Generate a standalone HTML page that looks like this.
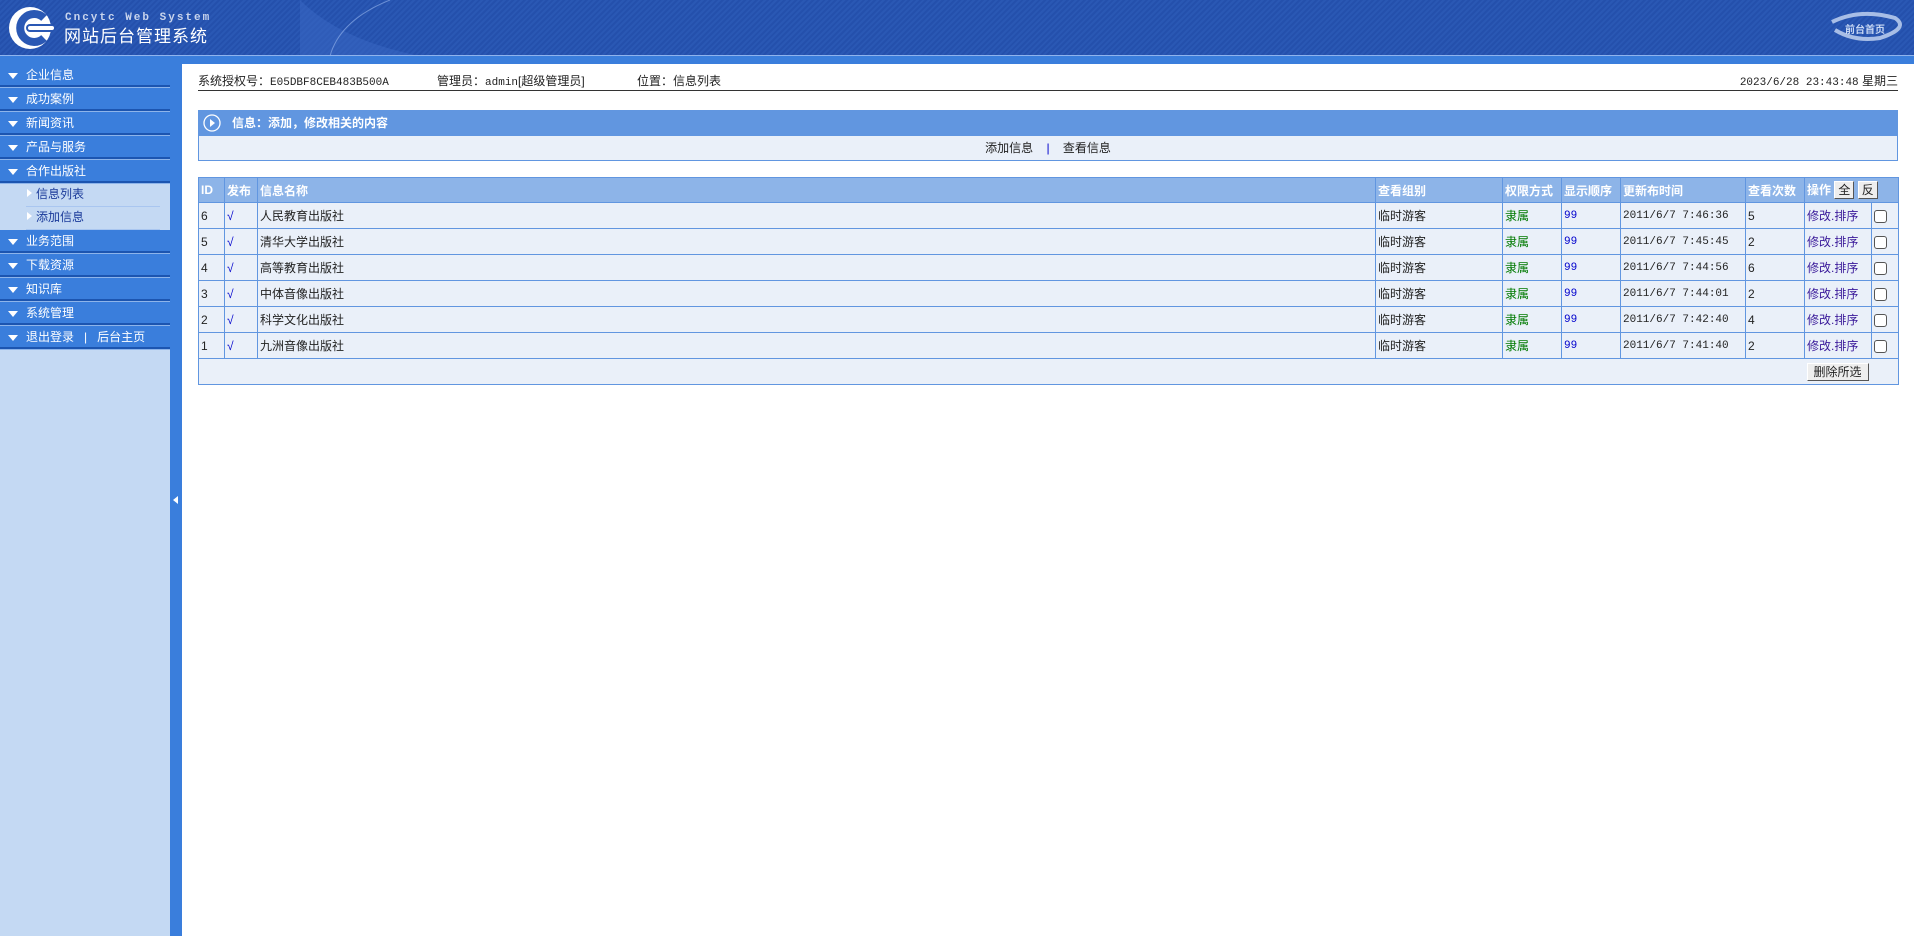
<!DOCTYPE html>
<html><head><meta charset="utf-8">
<style>
*{margin:0;padding:0;box-sizing:border-box}
body{width:1914px;height:936px;overflow:hidden;background:#fff;font-family:"Liberation Sans","Noto Sans CJK SC",sans-serif;font-size:12px;color:#222;position:relative}
#hd{position:absolute;left:0;top:0;width:1914px;height:56px;background:repeating-linear-gradient(135deg,#2a58b4 0 2px,#2450ac 2px 4px);}
#hd:after{content:"";position:absolute;left:0;right:0;bottom:0;height:1px;background:#8fb4ee}
#bar{position:absolute;left:0;top:56px;width:1914px;height:8px;background:#3a7edc}
#side{position:absolute;left:0;top:64px;width:170px;height:872px;background:#c4d9f3}
#split{position:absolute;left:170px;top:56px;width:12px;height:880px;background:#3a7edc}
.mi{height:24px;background:#3a7edc;color:#fff;line-height:22px;padding-left:26px;position:relative;border-bottom:2px solid #1c55b0;box-shadow:inset 0 -1px 0 #1c55b0}
.mi:after{content:"";position:absolute;left:0;right:0;bottom:-2px;height:1px;background:#8db4ea}
.mi:before{content:"";position:absolute;left:8px;top:9px;border-left:5px solid transparent;border-right:5px solid transparent;border-top:6px solid #fff}
.sub{background:#c4d9f3;padding:0 0 0 26px;height:46px}
.sub div{height:23px;line-height:21px;color:#1a3a9a;border-bottom:1px solid #a9c6f0;width:134px;padding-left:10px;position:relative}
.sub div:before{content:"";position:absolute;left:1px;top:5px;border-top:4px solid transparent;border-bottom:4px solid transparent;border-left:5px solid #fff}
#info{position:absolute;left:198px;top:70px;width:1700px;height:21px;border-bottom:1px solid #333;font-size:12px}
#info span{position:absolute;top:2px}
#panel{position:absolute;left:198px;top:110px;width:1700px;height:51px;border:1px solid #6196e0;background:#eaf0f9}
#panel .h{height:25px;background:#6196e0;color:#fff;font-weight:bold;line-height:25px;padding-left:33px;position:relative}
#panel .b{text-align:center;line-height:24px}
table{position:absolute;left:198px;top:177px;width:1700px;border-collapse:collapse;background:#eaf0f9;table-layout:fixed}
td{border:1px solid #6196e0;height:26px;padding:0 2px;white-space:nowrap;overflow:hidden;font-size:12px}
tr.th td{background:#8db4e8;color:#fff;font-weight:bold;height:25px}
.g{color:#007a00}.bl{color:#00c}.p{color:#3a1a9a}
.mono{font-family:"Liberation Mono","Noto Sans CJK SC",monospace;font-size:11px}
.cb{width:13px;height:13px;border:1px solid #555;border-radius:3px;background:#fff;display:inline-block;vertical-align:middle}
.btn{display:inline-block;border:1px solid #555;border-top-color:#fff;border-left-color:#fff;background:#eee;padding:0 6px;line-height:16px;font-weight:normal}
</style></head><body>
<div id="hd">
<svg width="1914" height="56" style="position:absolute;left:0;top:0">
<path d="M300 0 Q340 40 420 56 L300 56 Z" fill="#3a68c4" opacity=".5"/>
<path d="M330 56 Q340 20 390 0" stroke="#9ab8ee" stroke-width="1" fill="none" opacity=".6"/>
<circle cx="30" cy="28" r="21" fill="#fff"/>
<path d="M44 18 A14 14 0 1 0 44 38" stroke="#2a58b4" stroke-width="8" fill="none"/>
<rect x="26" y="24" width="28" height="8" rx="4" fill="#2a58b4"/>
<rect x="28" y="26" width="26" height="4" rx="2" fill="#fff"/>
<path d="M1832 22 Q1860 8 1895 18 Q1910 28 1880 38 Q1855 42 1835 30" fill="none" stroke="#c8d8f4" stroke-width="4" opacity=".8"/>
<text x="1845" y="33" fill="#c8d8f4" font-size="10" font-weight="bold" font-family="Noto Sans CJK SC,sans-serif">前台首页</text>
</svg>
<div style="position:absolute;left:65px;top:12px;color:#c8d4ec;font:bold 11px 'Liberation Mono',monospace;letter-spacing:2px">Cncytc Web System</div>
<div style="position:absolute;left:64px;top:22px;color:#fff;font-size:17px;letter-spacing:1px;font-family:'Noto Sans CJK SC',sans-serif">网站后台管理系统</div>
</div>
<div id="bar"></div>
<div id="side">
<div class="mi">企业信息</div><div class="mi">成功案例</div><div class="mi">新闻资讯</div><div class="mi">产品与服务</div><div class="mi">合作出版社</div>
<div class="sub"><div>信息列表</div><div>添加信息</div></div>
<div class="mi">业务范围</div><div class="mi">下载资源</div><div class="mi">知识库</div><div class="mi">系统管理</div><div class="mi">退出登录 &nbsp;&nbsp;| &nbsp;&nbsp;后台主页</div>
</div>
<div id="split"><div style="position:absolute;left:3px;top:440px;border-top:4px solid transparent;border-bottom:4px solid transparent;border-right:5px solid #fff"></div></div>
<div id="info"><span style="left:0">系统授权号：<span class="mono" style="position:static">E05DBF8CEB483B500A</span></span><span style="left:239px">管理员：<span class="mono" style="position:static">admin</span>[超级管理员]</span><span style="left:439px">位置：信息列表</span><span style="right:0"><span class="mono" style="position:static">2023/6/28 23:43:48</span> 星期三</span></div>
<div id="panel"><div class="h"><svg width="18" height="18" style="position:absolute;left:4px;top:3px"><circle cx="9" cy="9" r="8" fill="none" stroke="#fff" stroke-width="1.3"/><path d="M7 5 L12 9 L7 13Z" fill="#fff"/></svg>信息：添加，修改相关的内容</div>
<div class="b">添加信息 &nbsp;&nbsp;&nbsp;<span style="color:#00c">|</span>&nbsp;&nbsp;&nbsp; 查看信息</div></div>
<table>
<colgroup><col style="width:26px"><col style="width:33px"><col style="width:1118px"><col style="width:127px"><col style="width:59px"><col style="width:59px"><col style="width:125px"><col style="width:59px"><col style="width:67px"><col style="width:27px"></colgroup>
<tr class="th"><td>ID</td><td>发布</td><td>信息名称</td><td>查看组别</td><td>权限方式</td><td>显示顺序</td><td>更新布时间</td><td>查看次数</td><td colspan="2">操作 <span class="btn" style="color:#222;padding:0 3px">全</span> <span class="btn" style="color:#222;padding:0 3px">反</span></td></tr>
<tr><td>6</td><td class="bl">√</td><td>人民教育出版社</td><td>临时游客</td><td class="g">隶属</td><td class="bl mono">99</td><td class="mono">2011/6/7 7:46:36</td><td>5</td><td class="p">修改.排序</td><td><span class="cb"></span></td></tr>
<tr><td>5</td><td class="bl">√</td><td>清华大学出版社</td><td>临时游客</td><td class="g">隶属</td><td class="bl mono">99</td><td class="mono">2011/6/7 7:45:45</td><td>2</td><td class="p">修改.排序</td><td><span class="cb"></span></td></tr>
<tr><td>4</td><td class="bl">√</td><td>高等教育出版社</td><td>临时游客</td><td class="g">隶属</td><td class="bl mono">99</td><td class="mono">2011/6/7 7:44:56</td><td>6</td><td class="p">修改.排序</td><td><span class="cb"></span></td></tr>
<tr><td>3</td><td class="bl">√</td><td>中体音像出版社</td><td>临时游客</td><td class="g">隶属</td><td class="bl mono">99</td><td class="mono">2011/6/7 7:44:01</td><td>2</td><td class="p">修改.排序</td><td><span class="cb"></span></td></tr>
<tr><td>2</td><td class="bl">√</td><td>科学文化出版社</td><td>临时游客</td><td class="g">隶属</td><td class="bl mono">99</td><td class="mono">2011/6/7 7:42:40</td><td>4</td><td class="p">修改.排序</td><td><span class="cb"></span></td></tr>
<tr><td>1</td><td class="bl">√</td><td>九洲音像出版社</td><td>临时游客</td><td class="g">隶属</td><td class="bl mono">99</td><td class="mono">2011/6/7 7:41:40</td><td>2</td><td class="p">修改.排序</td><td><span class="cb"></span></td></tr>
<tr><td colspan="8" style="border-right:none"></td><td colspan="2" style="border-left:none"><span class="btn">删除所选</span></td></tr>
</table>
</body></html>
